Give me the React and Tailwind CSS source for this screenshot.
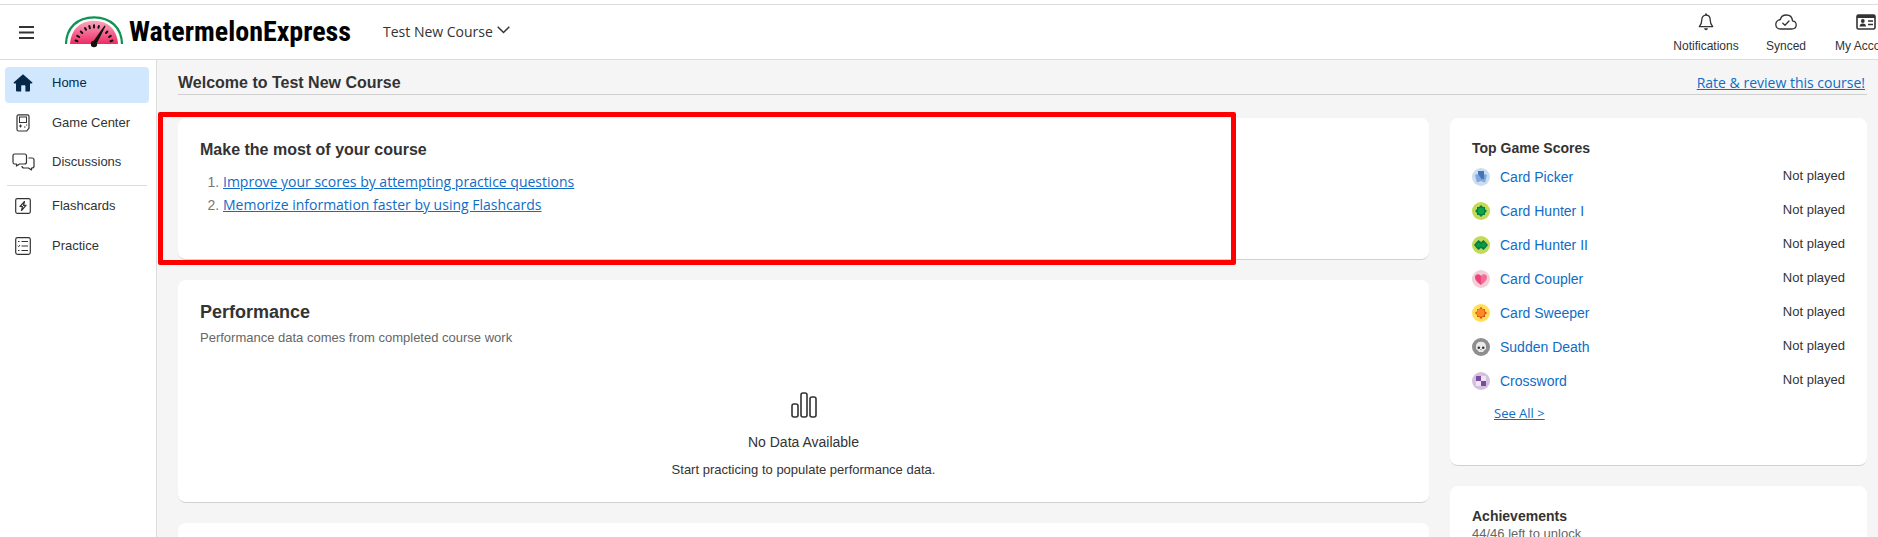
import React, { useState } from 'react';

const games = ['Card Picker', 'Card Hunter I', 'Card Hunter II', 'Card Coupler', 'Card Sweeper', 'Sudden Death', 'Crossword'];

const HomeIcon = () => (
  <svg width="20" height="18" viewBox="0 0 20 18" fill="#06294b" aria-hidden="true">
    <path d="M10 0.3 19.4 8.6Q19.6 9.6 18.6 9.6H17V16.6Q17 17.5 16 17.5H12.4V12Q12.4 11.2 11.6 11.2H9Q8.2 11.2 8.2 12V17.5H4Q3 17.5 3 16.6V9.6H1.4Q.4 9.6.6 8.6Z" />
  </svg>
);

const GameIcon = () => (
  <svg width="14" height="18" viewBox="0 0 14 18" fill="none" stroke="#333" aria-hidden="true">
    <path d="M2.5.9H11.5Q13 .9 13 2.4V14L10.8 17H2.5Q1 17 1 15.5V2.4Q1 .9 2.5.9Z" strokeWidth="1.2" />
    <rect x="3.5" y="3" width="7" height="5.5" />
    <path d="M3 12h3M4.500 10.500v3M8 13h1.500M10 11h1.200" />
  </svg>
);

const DiscussIcon = () => (
  <svg width="23" height="18" viewBox="0 0 23 18" fill="none" stroke="#333" strokeWidth="1.2" strokeLinejoin="round" aria-hidden="true">
    <path d="M2.500 1H12.500Q14.500 1 14.500 3V9Q14.500 11 12.500 11H7.500L4.500 13V11H2.500Q1 11 1 9V3Q1 1 2.500 1Z" />
    <path d="M16.500 5H20Q22 5 22 7V13Q22 15 20 15H19.500V17L16.500 15H12Q10 15 10 13" />
  </svg>
);

const FlashIcon = () => (
  <svg width="16" height="16" viewBox="0 0 16 16" fill="none" stroke="#333" aria-hidden="true">
    <rect x=".7" y=".7" width="14.600" height="14.600" rx="1.500" strokeWidth="1.200" />
    <path d="M9.500 3.500 5 8.500H7.500L6.500 12.500 11 7.300H8.500Z" strokeWidth="1.200" strokeLinejoin="round" />
  </svg>
);

const PracticeIcon = () => (
  <svg width="16" height="18" viewBox="0 0 16 18" fill="none" stroke="#333" aria-hidden="true">
    <rect x=".7" y=".7" width="14.600" height="16.600" rx="1.800" strokeWidth="1.200" />
    <path d="M6.500 4.500H13M6.500 9H13M6.500 13.500H13M3 4.500H4.500M3 13.500H4.500M2.700 8.800 3.600 9.700 5 8" />
  </svg>
);

const BellIcon = () => (
  <svg width="16" height="18" viewBox="0 0 16 18" fill="none" stroke="#333" strokeWidth="1.300" strokeLinejoin="round" aria-hidden="true">
    <path d="M8 2.200C5 2.200 3.800 4.500 3.800 7C3.800 10.500 2.800 12 1.300 13.600H14.700C13.200 12 12.200 10.500 12.200 7C12.200 4.500 11 2.200 8 2.200Z" />
    <path d="M8 .5V2.200" strokeWidth="1.800" />
    <path d="M6 15.200H10Q9.500 17.200 8 17.200T6 15.200Z" fill="#333" stroke="none" />
  </svg>
);

const CloudIcon = () => (
  <svg width="22" height="16" viewBox="0 0 22 16" fill="none" stroke="#333" strokeWidth="1.300" strokeLinecap="round" strokeLinejoin="round" aria-hidden="true">
    <path d="M5.500 15H16.500C19.500 15 21.200 13.300 21.200 11C21.200 8.700 19.600 7.200 17.500 6.900C17.200 3.200 14.700 1 11.300 1C8.300 1 6 2.800 5.400 5.500C2.800 6 .8 7.900.8 10.500C.8 13.200 2.900 15 5.500 15Z" />
    <path d="M7.800 9.200 10 11.200 14 7" />
  </svg>
);

const AccountIcon = () => (
  <svg width="20" height="16" viewBox="0 0 20 16" fill="none" stroke="#333" aria-hidden="true">
    <rect x="1" y="1" width="18" height="14" rx="1.500" strokeWidth="1.600" />
    <path d="M1 2.500H19" strokeWidth="3" />
    <circle cx="6.800" cy="7" r="1.900" fill="#333" stroke="none" />
    <path d="M3.500 12.500Q3.800 9.500 6.800 9.500T10.100 12.500Z" fill="#333" stroke="none" />
    <path d="M12 7H17M12 10.500H17" strokeWidth="1.500" />
  </svg>
);

const Logo = () => (
  <svg width="58" height="32" viewBox="0 0 58 32" aria-hidden="true">
    <defs>
      <linearGradient id="flesh" x1="0" y1="0" x2="0" y2="1">
        <stop offset="0" stopColor="#f9a9bf" />
        <stop offset="1" stopColor="#ee2a64" />
      </linearGradient>
    </defs>
    <path d="M1 28C1.500 12 12 1.300 29 1.300S56.500 12 57 28" fill="none" stroke="#0d9450" strokeWidth="2.200" />
    <path d="M5 28C6 13.500 15 4.800 29 4.800S52 13.500 53 28Z" fill="url(#flesh)" />
    <g stroke="#111" strokeWidth="2" strokeLinecap="round">
      <path d="M10.500 24.500 12.500 25.200M12.200 19.800 14.200 21M15.800 15.500 17.300 17M20 12 21 13.800M24.300 10 24.900 12.200M29 9.200V11.500M33.900 10 33.400 11.800M42.400 15.500 41 17M45.800 19.800 44 21M47.500 24.500 45.500 25.200" />
    </g>
    <path d="M39.500 9.500 40.500 10.200 31.500 28 27.500 26.500Z" fill="#111" />
    <circle cx="29" cy="28" r="3.200" fill="#111" />
  </svg>
);

const GameBadge = ({ name }) => {
  const art = {
    'Card Picker': (
      <>
        <circle cx="9" cy="9" r="9" fill="#c9def0" />
        <path d="M3 7 6 6 9 9 12 6 15 7 13 14.500 9 13 5 14.500Z" fill="#83a7da" />
        <path d="M6 3H12V11H9.500L6 6Z" fill="#4275b9" />
      </>
    ),
    'Card Hunter I': (
      <>
        <circle cx="9" cy="9" r="9" fill="#c4d955" />
        <path d="M9 3 11 5H13V7L15 9 13 11V13H11L9 15 7 13H5V11L3 9 5 7V5H7Z" fill="#087e45" />
        <circle cx="9" cy="9" r="3.200" fill="#0ca64f" />
      </>
    ),
    'Card Hunter II': (
      <>
        <circle cx="9" cy="9" r="9" fill="#c4d955" />
        <path d="M6.500 4 9 6 11.500 4 14 6.500 16 9 14 11.500 11.500 14 9 12 6.500 14 4 11.500 2 9 4 6.500Z" fill="#087e45" />
        <circle cx="6.500" cy="9" r="2.300" fill="#0a9b4b" />
        <circle cx="11.500" cy="9" r="2.300" fill="#0a9b4b" />
      </>
    ),
    'Card Coupler': (
      <>
        <circle cx="9" cy="9" r="9" fill="#f1ced8" />
        <path d="M9 15C5 12 3 10 3 7.500C3 4 7.200 3.200 9 6V15Z" fill="#e84578" />
        <path d="M9 15C13 12 15 10 15 7.500C15 4 10.800 3.200 9 6V15Z" fill="#f76b97" />
      </>
    ),
    'Card Sweeper': (
      <>
        <circle cx="9" cy="9" r="9" fill="#ffdf58" />
        <path d="M9 2.800 10.700 5H13V7.300L15.200 9 13 10.700V13H10.700L9 15.200 7.300 13H5V10.700L2.800 9 5 7.300V5H7.300Z" fill="#db4d16" />
        <circle cx="8.700" cy="8.700" r="4" fill="#f98a28" />
      </>
    ),
    'Sudden Death': (
      <>
        <circle cx="9" cy="9" r="9" fill="#8e8e8e" />
        <path d="M9 3.800C5.800 3.800 4 5.800 4 8.500V11L6 12.500 7 14H11L12 12.500 14 11V8.500C14 5.800 12.200 3.800 9 3.800Z" fill="#eaeaec" />
        <circle cx="6.800" cy="9.700" r="1.300" fill="#333" />
        <circle cx="11.200" cy="9.700" r="1.300" fill="#333" />
        <path d="M9 11.200V12.200" stroke="#555" />
      </>
    ),
    Crossword: (
      <>
        <circle cx="9" cy="9" r="9" fill="#d3c2df" />
        <path d="M9 4H14V9H9ZM4 9H9V14H4Z" fill="#ece5f2" />
        <path d="M4 4H9V9H4ZM9 9H14V14H9Z" fill="#7b4c9e" />
      </>
    ),
  };
  return <svg width="18" height="18" viewBox="0 0 18 18" className="shrink-0" aria-hidden="true">{art[name]}</svg>;
};

const SideItem = ({ icon, label, active }) => (
  <a
    href="#"
    className={`flex h-9 items-center rounded pb-1 text-[13px] ${active ? 'bg-[#d0e7fd] text-[#06294b]' : 'text-[#333]'}`}
  >
    <span className="flex w-9 shrink-0 justify-center">{icon}</span>
    <span className="pl-[11px]">{label}</span>
  </a>
);

const TopAction = ({ icon, label }) => (
  <button type="button" className="flex w-20 flex-col items-center gap-1.5 pt-0.5 whitespace-nowrap text-xs">
    <span className="flex h-5 items-center">{icon}</span>
    {label}
  </button>
);

const Card = ({ className, children }) => (
  <section className={`relative rounded-lg border-b border-[#d0d0d0] bg-white ${className}`}>{children}</section>
);

const App = () => {
  const [menuOpen, setMenuOpen] = useState(true);

  return (
    <div className="flex h-screen flex-col overflow-hidden bg-white pt-1 font-['Liberation_Sans',Arial,sans-serif] text-[#333]">
      <header className="flex h-14 shrink-0 items-center border-y border-[#dcdcdc] pl-[19px]">
        <button type="button" aria-label="Menu" aria-expanded={menuOpen} onClick={() => setMenuOpen(!menuOpen)}>
          <svg width="15" height="13" viewBox="0 0 15 13" stroke="#333" strokeWidth="2">
            <path d="M0 1H15M0 6.500H15M0 12H15" />
          </svg>
        </button>
        <a href="#" className="ml-[31px] flex items-center gap-1.5">
          <Logo />
          <span className="font-['Roboto_Condensed','Open_Sans_Condensed','Noto_Sans_Condensed','Liberation_Sans',sans-serif] text-[28px] leading-8 font-bold text-black">WatermelonExpress</span>
        </a>
        <button type="button" className="ml-8 flex items-center gap-1 font-['Open_Sans',sans-serif] text-sm whitespace-nowrap">
          Test New Course
          <svg width="13" height="8" viewBox="0 0 13 8" fill="none" stroke="#333" strokeWidth="1.500" className="mb-1">
            <path d="M.7.8 6.500 6.500 12.300.8" />
          </svg>
        </button>
        <nav className="-mr-7 ml-auto flex shrink-0">
          <TopAction icon={<BellIcon />} label="Notifications" />
          <TopAction icon={<CloudIcon />} label="Synced" />
          <TopAction icon={<AccountIcon />} label="My Account" />
        </nav>
      </header>

      <div className="flex min-h-0 flex-1">
        {menuOpen && (
          <nav className="flex w-[157px] shrink-0 flex-col border-r border-[#dcdcdc] px-[5px] pt-[7px] pr-[7px]">
            <SideItem icon={<HomeIcon />} label="Home" active />
            <div className="flex flex-col gap-[3px] pt-1">
              <SideItem icon={<GameIcon />} label="Game Center" />
              <SideItem icon={<DiscussIcon />} label="Discussions" />
            </div>
            <hr className="mx-0.5 mt-[3px] mb-1 border-[#dcdcdc]" />
            <div className="flex flex-col gap-1">
              <SideItem icon={<FlashIcon />} label="Flashcards" />
              <SideItem icon={<PracticeIcon />} label="Practice" />
            </div>
          </nav>
        )}

        <main className="min-w-0 flex-1 overflow-hidden bg-[#f5f5f5] pt-3 pr-[11px] pl-[21px]">
          <div className="flex h-[23px] items-center justify-between border-b border-[#d0d0d0]">
            <h1 className="text-base font-bold">Welcome to Test New Course</h1>
            <a href="#" className="pr-0.5 font-['Open_Sans',sans-serif] text-sm text-[#0f6cc7] underline">Rate &amp; review this course!</a>
          </div>

          <div className="mt-[23px] flex items-start gap-[21px]">
            <div className="flex min-w-0 flex-1 flex-col gap-5">
              <Card className="px-[22px] pt-5 pb-[43px]">
                <h2 className="text-base font-bold">Make the most of your course</h2>
                <ol className="mt-2 list-decimal pl-[23px] font-['Open_Sans',sans-serif] text-sm leading-[23px] text-[#777] marker:font-['Liberation_Sans',Arial,sans-serif]">
                  <li>
                    <a href="#" className="text-[#0f6cc7] underline">Improve your scores by attempting practice questions</a>
                  </li>
                  <li>
                    <a href="#" className="text-[#0f6cc7] underline">Memorize information faster by using Flashcards</a>
                  </li>
                </ol>
                <div className="pointer-events-none absolute -top-1.5 right-[193px] -bottom-[6px] -left-5 rounded-xs border-5 border-[#f00]" />
              </Card>

              <Card className="px-[22px] pt-5 pb-[22px]">
                <h2 className="text-lg leading-6 font-bold">Performance</h2>
                <p className="mt-1 text-[13px] leading-5 text-[#666]">Performance data comes from completed course work</p>
                <div className="mt-11 flex flex-col items-center">
                  <svg width="26" height="26" viewBox="0 0 26 26" fill="none" stroke="#333" strokeWidth="1.600" aria-hidden="true">
                    <rect x="1" y="12" width="6" height="13" rx="2" />
                    <rect x="10" y="1" width="6" height="24" rx="2" />
                    <rect x="19" y="5" width="6" height="20" rx="2" />
                  </svg>
                  <p className="mt-3.5 text-sm leading-5">No Data Available</p>
                  <p className="mt-2 text-[13px] leading-5">Start practicing to populate performance data.</p>
                </div>
              </Card>

              <Card className="h-40" />
            </div>

            <aside className="flex w-[417px] shrink-0 flex-col gap-5">
              <Card className="px-[22px] pt-5 pb-10">
                <h2 className="text-sm leading-5 font-bold">Top Game Scores</h2>
                <ul className="mt-0.5 mb-[3px]">
                  {games.map(game => (
                    <li key={game} className="flex h-[34px] items-center">
                      <GameBadge name={game} />
                      <a href="#" className="ml-2.5 text-sm text-[#0f6cc7]">{game}</a>
                      <span className="ml-auto pb-0.5 text-[13px]">Not played</span>
                    </li>
                  ))}
                </ul>
                <a href="#" className="ml-[22px] font-['Open_Sans',sans-serif] text-[13px] text-[#0f6cc7] underline">See All &gt;</a>
              </Card>

              <Card className="px-[22px] pt-5 pb-10">
                <h2 className="text-sm leading-5 font-bold">Achievements</h2>
                <p className="text-[13px] leading-4 text-[#666]">44/46 left to unlock</p>
              </Card>
            </aside>
          </div>
        </main>
      </div>
    </div>
  );
};

export default App;
